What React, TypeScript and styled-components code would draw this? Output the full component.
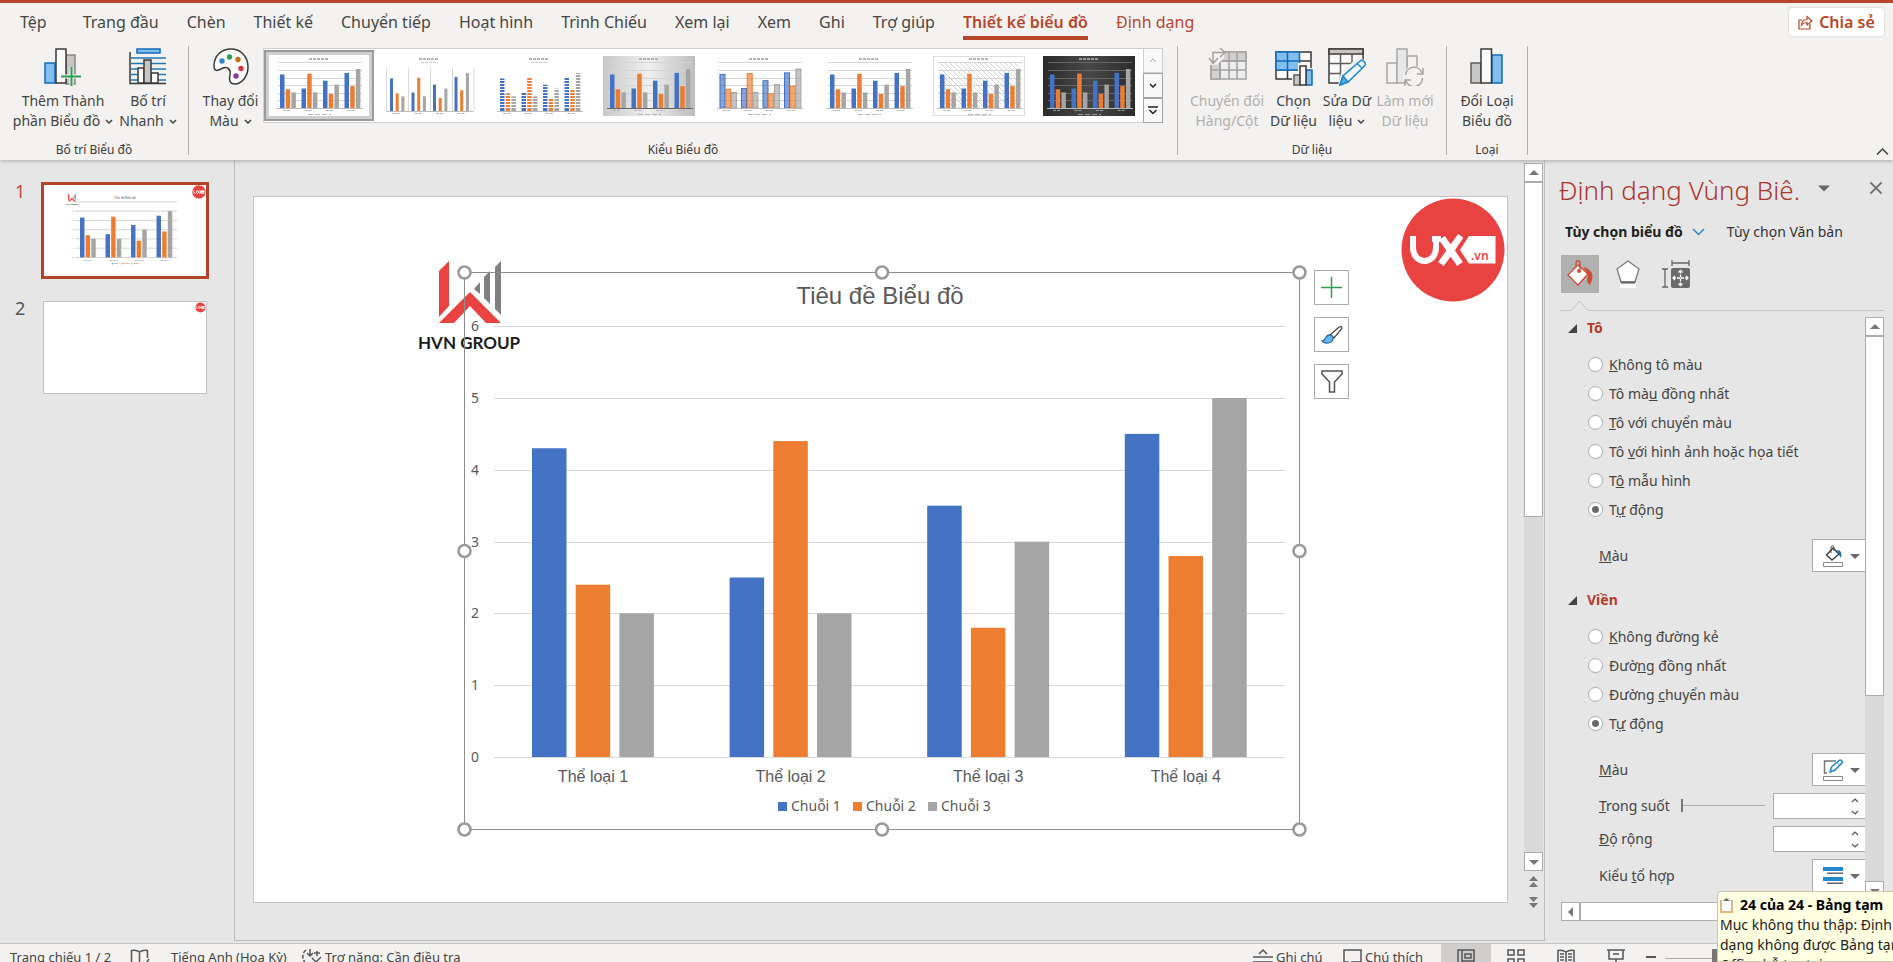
import React, { useState } from 'react';
import styled, { createGlobalStyle, css } from 'styled-components';

const UI = '"Noto Sans", "Open Sans", sans-serif';
const ARIAL = '"Liberation Sans", Arial, sans-serif';
const RED = '#b7472a';

const GlobalStyle = createGlobalStyle`
  *, *::before, *::after { box-sizing: border-box; }
  body { margin: 0; background: #e6e6e6; }
  button, input { font: inherit; color: inherit; margin: 0; }
  button { background: none; border: 0; padding: 0; cursor: pointer; }
  svg { display: block; flex: none; }
`;

const Shell = styled.div`
  display: flex;
  flex-direction: column;
  height: 100vh;
  overflow: hidden;
  background: #e6e6e6;
  color: #444;
  font: 14px/20px ${UI};
  white-space: nowrap;
`;

/* ---------- Ribbon ---------- */

const Ribbon = styled.header`
  position: relative;
  flex: none;
  height: 160px;
  background: #f3f2f1;
  border-top: 3px solid ${RED};
  box-shadow: 0 1px 4px #a8a8a8;
  z-index: 1;
`;

const TabBar = styled.nav`
  display: flex;
  align-items: flex-start;
  gap: 28px;
  height: 43px;
  padding: 5px 9px 0 20px;
  font-size: 16px;
  line-height: 28px;
`;

const Tab = styled.a<{ $tone?: 'active' | 'accent' }>`
  color: ${p => (p.$tone ? RED : '#484644')};
  text-decoration: none;
  &:first-child { margin-right: 8px; }
  ${p => p.$tone === 'active' && css`
    font-weight: 600;
    border-bottom: 4px solid ${RED};
  `}
`;

const ShareButton = styled.button`
  display: flex;
  align-items: center;
  justify-content: center;
  gap: 6px;
  width: 95px;
  height: 28px;
  margin-left: auto;
  background: #fff;
  border-radius: 3px;
  box-shadow: 0 0 2px #bbb;
  color: ${RED};
  font-size: 16px;
  font-weight: 600;
`;

const Groups = styled.div`
  display: flex;
  height: 109px;
`;

const Group = styled.section<{ $width: number }>`
  display: flex;
  flex-direction: column;
  justify-content: space-between;
  width: ${p => p.$width}px;
  border-right: 1px solid #b4b2b0;
`;

const GroupBody = styled.div<{ $center?: boolean }>`
  display: flex;
  justify-content: ${p => (p.$center ? 'center' : 'flex-start')};
  padding-left: ${p => (p.$center ? 0 : 9)}px;
`;

const GroupName = styled.h2`
  margin: 0;
  font-size: 12px;
  line-height: 10px;
  font-weight: 400;
  text-align: center;
  color: #3b3a39;
`;

const RibbonButton = styled.button<{ $width: number }>`
  display: flex;
  flex-direction: column;
  align-items: center;
  width: ${p => p.$width}px;
  color: #444;
  font-size: 14px;
  line-height: 20px;
  &:disabled { color: #b1afad; }
`;

const IconBox = styled.span`
  height: 45px;
  padding-top: 2px;
`;

const LabelLine = styled.span`
  display: flex;
  align-items: center;
  gap: 5px;
`;

const Gallery = styled.div`
  display: flex;
  height: 75px;
  margin-top: 2px;
  background: #fff;
  border: 1px solid #d2d0ce;
`;

const GalleryItem = styled.button<{ $selected?: boolean }>`
  display: flex;
  align-items: center;
  justify-content: center;
  width: 110px;
  height: 71px;
  margin-top: 1px;
  ${p => p.$selected && css`
    border: 2px solid #9a9a9a;
    box-shadow: inset 0 0 0 3px #cfcfcf;
  `}
`;

const GalleryScroll = styled.div`
  display: grid;
  grid-template-rows: repeat(3, 1fr);
  width: 20px;
  margin: -1px;
`;

const GalleryArrow = styled.button`
  display: grid;
  place-items: center;
  background: #f8f8f8;
  border: 1px solid #a5a3a1;
  color: #222;
  &:disabled { color: #aaa; border-color: #d0d0d0; }
`;

const CollapseButton = styled.button`
  position: absolute;
  right: 2px;
  bottom: 3px;
  padding: 2px;
`;

/* ---------- Workspace ---------- */

const Workspace = styled.main`
  display: flex;
  flex: 1;
  min-height: 0;
`;

const Thumbnails = styled.aside`
  display: flex;
  flex-direction: column;
  gap: 20px;
  flex: none;
  width: 235px;
  margin-bottom: 2px;
  padding: 22px 0 0 15px;
  border-right: 1px solid #bdbdbd;
`;

const ThumbRow = styled.button<{ $current?: boolean }>`
  display: flex;
  align-items: flex-start;
  text-align: left;
  font-size: 18px;
  line-height: 18px;
  color: ${p => (p.$current ? '#c9473b' : '#555')};
`;

const ThumbNumber = styled.span`
  width: 26px;
`;

const ThumbFrame = styled.span<{ $current?: boolean }>`
  display: block;
  width: 168px;
  border: 3px solid ${p => (p.$current ? '#b0452c' : 'transparent')};
`;

const ThumbPage = styled.span<{ $current?: boolean }>`
  display: block;
  background: #fff;
  aspect-ratio: 16 / 9;
  box-shadow: ${p => (p.$current ? 'none' : '0 0 0 1px #c4c2c0')};
  svg { width: 100%; height: 100%; }
`;

const Editor = styled.section`
  display: flex;
  flex: 1;
  min-width: 0;
  margin-bottom: 2px;
  border-right: 1px solid #bdbdbd;
  border-bottom: 1px solid #bdbdbd;
`;

const Stage = styled.div`
  flex: 1;
  min-width: 0;
  padding: 37px 17px 0 19px;
`;

const Slide = styled.div`
  position: relative;
  background: #fff;
  box-shadow: 0 0 0 1px #c4c4c4;
  > svg { width: 100%; height: auto; }
`;

const ChartTools = styled.div`
  position: absolute;
  left: 84.6%;
  top: 10.4%;
  display: flex;
  flex-direction: column;
  gap: 12px;
`;

const ChartTool = styled.button`
  display: grid;
  place-items: center;
  width: 35px;
  height: 35px;
  background: #fff;
  border: 1px solid #ababab;
`;

const ScrollColumn = styled.div`
  display: flex;
  flex-direction: column;
  flex: none;
  width: 19px;
`;

const EditorScroll = styled(ScrollColumn)`
  margin: 3px 1px 27px 0;
`;

const ScrollButton = styled.button`
  display: grid;
  place-items: center;
  flex: none;
  width: 19px;
  height: 19px;
  background: #fff;
  border: 1px solid #ababab;
  color: #777;
`;

const Track = styled.div`
  flex: 1;
  background: #dadada;
`;

const Thumb = styled.div<{ $share: number }>`
  height: ${p => p.$share}%;
  background: #fff;
  border: 1px solid #ababab;
`;

const PageJump = styled.button`
  display: grid;
  place-items: center;
  height: 21px;
  color: #777;
`;

/* ---------- Format pane ---------- */

const Pane = styled.aside`
  position: relative;
  display: flex;
  flex-direction: column;
  flex: none;
  width: 348px;
  padding: 13px 9px 22px 14px;
`;

const PaneHeader = styled.div`
  display: flex;
  height: 40px;
`;

const PaneTitle = styled.h1`
  width: 258px;
  margin: 0;
  color: #ac3630;
  font: 300 26px/34px ${UI};
`;

const PaneIconButton = styled.button`
  display: grid;
  place-items: center;
  width: 14px;
  height: 30px;
  margin-right: 38px;
  color: #6a6a6a;
  &:last-child { margin-right: 0; }
`;

const PaneTabs = styled.div`
  display: flex;
  align-items: center;
  gap: 8px;
  height: 38px;
  padding-left: 6px;
`;

const PaneTab = styled.button<{ $active?: boolean }>`
  display: flex;
  align-items: center;
  gap: 9px;
  margin-right: 14px;
  font-weight: ${p => (p.$active ? 700 : 400)};
  color: ${p => (p.$active ? '#222' : '#333')};
`;

const PaneIcons = styled.div`
  display: flex;
  gap: 10px;
  height: 49px;
  padding: 4px 0 0 2px;
`;

const PaneIcon = styled.button<{ $active?: boolean }>`
  display: grid;
  place-items: center;
  width: 38px;
  height: 38px;
  background: ${p => (p.$active ? '#b0b0af' : 'transparent')};
`;

const PaneBody = styled.div`
  display: flex;
  flex: 1;
  min-height: 0;
  margin-bottom: 2px;
`;

const Options = styled.div`
  flex: 1;
  min-width: 0;
  overflow: hidden;
  padding-top: 1px;
`;

const BodyScroll = styled(ScrollColumn)`
  padding-top: 5px;
`;

const Section = styled.section`
  margin-bottom: 13px;
`;

const SectionTitle = styled.button`
  display: flex;
  align-items: center;
  gap: 10px;
  height: 30px;
  margin-bottom: 7px;
  padding-left: 9px;
  color: #b5392c;
  font-weight: 700;
`;

const RadioRow = styled.label`
  display: flex;
  align-items: center;
  gap: 6px;
  height: 29px;
  padding-left: 29px;
`;

const Radio = styled.input`
  appearance: none;
  width: 15px;
  height: 15px;
  border: 1px solid #ababab;
  border-radius: 50%;
  background: #fff;
  &:checked { background: radial-gradient(circle, #6a6a6a 0 3px, #fff 4px); }
`;

const Settings = styled.div`
  display: flex;
  flex-direction: column;
  gap: 7px;
  padding: 15px 0 0 40px;
`;

const Setting = styled.div`
  display: flex;
  align-items: center;
  justify-content: space-between;
`;

const DropButton = styled.button`
  display: flex;
  align-items: center;
  justify-content: space-between;
  width: 53px;
  height: 33px;
  padding: 0 5px 0 10px;
  background: #fff;
  border: 1px solid #ababab;
  border-right: 0;
  color: #6a6a6a;
`;

const Slider = styled.input`
  appearance: none;
  width: 84px;
  height: 13px;
  margin: 0 8px 2px auto;
  background: linear-gradient(#ababab, #ababab) center / 100% 1px no-repeat;
  &::-webkit-slider-thumb {
    appearance: none;
    width: 2px;
    height: 13px;
    background: #777;
  }
`;

const Spinner = styled.div`
  display: flex;
  width: 92px;
  height: 26px;
  background: #fff;
  border: 1px solid #ababab;
  border-right: 0;
`;

const SpinnerInput = styled.input`
  flex: 1;
  min-width: 0;
  border: 0;
  outline: 0;
  background: none;
`;

const SpinnerSteps = styled.div`
  display: flex;
  flex-direction: column;
  justify-content: space-around;
  width: 20px;
  color: #555;
  button { display: grid; place-items: center; height: 10px; }
`;

const PaneHScroll = styled.div`
  display: flex;
  height: 19px;
  margin-left: 2px;
`;

const HThumb = styled.div`
  flex: 1;
  background: #fff;
  border: 1px solid #ababab;
`;

const Toast = styled.div`
  position: fixed;
  right: 0;
  bottom: 0;
  width: 176px;
  height: 71px;
  padding: 3px 0 0 2px;
  overflow: hidden;
  background: #ffffe1;
  border: 1px solid #c9c9b0;
  border-right: 0;
  border-radius: 4px 0 0 0;
  color: #222;
  z-index: 2;
`;

const ToastTitle = styled.div`
  display: flex;
  align-items: center;
  gap: 7px;
  color: #000;
  font-weight: 700;
`;

/* ---------- Status bar ---------- */

const StatusBar = styled.footer`
  flex: none;
  height: 19px;
  overflow: hidden;
  background: #f3f2f1;
  border-top: 1px solid #c6c4c2;
`;

const StatusRow = styled.div`
  display: flex;
  height: 26px;
  padding-left: 10px;
  font-size: 13px;
`;

const StatusButton = styled.button<{ $width: number; $on?: boolean }>`
  display: flex;
  align-items: center;
  gap: 3px;
  width: ${p => p.$width}px;
  background: ${p => (p.$on ? '#d0cecc' : 'transparent')};
`;

const ViewButton = styled(StatusButton)`
  justify-content: center;
`;

const StatusEnd = styled.div`
  display: flex;
  margin-left: auto;
  width: 640px;
`;

const ZoomSlider = styled(Slider)`
  width: 99px;
  height: 18px;
  margin: 5px 0 0 4px;
  &::-webkit-slider-thumb { width: 6px; height: 18px; }
`;

/* ---------- Drawings ---------- */

const BLUE = '#4472c4';
const ORANGE = '#ed7d31';
const GREY = '#a5a5a5';
const SERIES = [
  { name: 'Chuỗi 1', color: BLUE, x: 525 },
  { name: 'Chuỗi 2', color: ORANGE, x: 600 },
  { name: 'Chuỗi 3', color: GREY, x: 675 },
];
const DATA = [[4.3, 2.4, 2], [2.5, 4.4, 2], [3.5, 1.8, 3], [4.5, 2.8, 5]];

const Chevron = ({ size = 8, up = false, w = 1.5 }: { size?: number; up?: boolean; w?: number }) => (
  <svg width={size} height={size / 2 + 1} viewBox={`0 0 ${size} ${size / 2 + 1}`} fill="none" stroke="currentColor" strokeWidth={w}>
    <path d={up ? `M1 ${size / 2}L${size / 2} 1L${size - 1} ${size / 2}` : `M1 1L${size / 2} ${size / 2}L${size - 1} 1`} />
  </svg>
);

const Triangle = ({ dir, w = 10 }: { dir: 'up' | 'down' | 'left'; w?: number }) => {
  const d = { up: 'M0 7L5 2L10 7Z', down: 'M0 3L5 8L10 3Z', left: 'M7 0L2 5L7 10Z' }[dir];
  return <svg width={w} height={w} viewBox="0 0 10 10" fill="currentColor"><path d={d} /></svg>;
};

const UxBadge = ({ cx, cy, scale = 1 }: { cx: number; cy: number; scale?: number }) => (
  <g transform={`translate(${cx} ${cy}) scale(${scale})`}>
    <circle r="51.5" fill="#e84341" />
    <g fill="none" stroke="#fff" strokeWidth="6">
      <path d="M-40-14V-2a11.500 13 0 0 0 23 0V-10" />
      <path d="M-21-11H-12" />
      <path d="M8-14L-12 14" strokeWidth="7" />
      <path d="M-11-12L7 14" strokeWidth="7" />
    </g>
    <path d="M14-16L4-1" stroke="#e84341" strokeWidth="2" />
    <path d="M16-14H42.500V13.500H16L7 0Z" fill="#fff" />
    <text x="18" y="10" fontFamily={UI} fontSize="12" fontWeight="600" fill="#e84341">.vn</text>
  </g>
);

const HvnLogo = () => (
  <g>
    <g fill="#e84341">
      <path d="M186 75L196 65V110L186 121Z" />
      <path d="M217 96L248 127H233L217 110L201 127H186Z" />
    </g>
    <g fill="#808080">
      <path d="M221 93L227 86V98Z" />
      <path d="M231 81L237 75V108L231 102Z" />
      <path d="M242 71L248 65V119L242 113Z" />
    </g>
    <text x="165" y="153" fontFamily="Lato, sans-serif" fontSize="17" fontWeight="700" fill="#1c1c1c">HVN GROUP</text>
  </g>
);

const SlideChart = ({ grid = '#d9d9d9' }: { grid?: string }) => {
  const base = 561;
  const unit = 71.8;
  return (
    <g>
      <text x="627" y="108" textAnchor="middle" fontFamily={ARIAL} fontSize="24" fill="#595959">Tiêu đề Biểu đồ</text>
      {[0, 1, 2, 3, 4, 5, 6].map(n => (
        <g key={n}>
          <path d={`M241 ${Math.round(base - n * unit) + 0.5}H1032`} stroke={grid} strokeWidth={grid === '#d9d9d9' ? 1 : 5} />
          <text x="222" y={Math.round(base - n * unit) + 5} textAnchor="middle" fontFamily={UI} fontSize="14" fill="#595959">{n}</text>
        </g>
      ))}
      {DATA.map((row, i) => (
        <g key={i}>
          {row.map((v, j) => (
            <rect key={j} x={279 + i * 197.6 + j * 43.7} y={base - v * unit} width="34.5" height={v * unit} fill={SERIES[j].color} />
          ))}
          <text x={340 + i * 197.6} y="586" textAnchor="middle" fontFamily={ARIAL} fontSize="16" fill="#595959">{`Thể loại ${i + 1}`}</text>
        </g>
      ))}
      {SERIES.map(s => (
        <g key={s.name}>
          <rect x={s.x} y="606" width="9" height="9" fill={s.color} />
          <text x={s.x + 13} y="615" fontFamily={UI} fontSize="14" fill="#595959">{s.name}</text>
        </g>
      ))}
    </g>
  );
};

const Selection = () => (
  <g fill="none" stroke="#8c8c8c">
    <rect x="211.5" y="76.500" width="835" height="557" />
    <g fill="#fff" stroke="#999" strokeWidth="2.500">
      {[[0, 0], [1, 0], [2, 0], [0, 1], [2, 1], [0, 2], [1, 2], [2, 2]].map(([x, y]) => (
        <circle key={`${x}${y}`} cx={211.5 + x * 417.5} cy={76.5 + y * 278.5} r="6" />
      ))}
    </g>
  </g>
);

const MiniChart = ({ kind }: { kind: number }) => {
  const dark = kind === 7;
  const shaded = kind === 3;
  const thin = kind === 1;
  const bw = thin ? 3 : kind === 4 ? 5 : 4.5;
  const ink = dark ? '#999' : '#b4b4b4';
  const top = thin || kind === 2 ? 6 : 0;
  return (
    <svg width="92" height="60" viewBox="0 0 92 60">
      <defs>
        <linearGradient id={`shade${kind}`}>
          <stop offset="0" stopColor={dark ? '#2b2b2b' : '#c8c8c8'} />
          <stop offset=".5" stopColor={dark ? '#484848' : '#f0f0f0'} />
          <stop offset="1" stopColor={dark ? '#2b2b2b' : '#bdbdbd'} />
        </linearGradient>
        <pattern id="hatch" width="5" height="5" patternUnits="userSpaceOnUse">
          <path d="M0 0L5 5" stroke="#d4d4d4" />
        </pattern>
      </defs>
      {(dark || shaded) && <rect width="92" height="60" fill={`url(#shade${kind})`} />}
      {kind === 6 && <><rect x=".5" y=".5" width="91" height="59" fill="#fff" stroke="#ddd" /><rect x="6" y="6" width="82" height="46" fill="url(#hatch)" /></>}
      <path d="M36 3H56" stroke={ink} strokeWidth="2" strokeDasharray="3 1" />
      {top > 0 && <path d="M38 6.500H55" stroke="#c4c4c4" strokeDasharray="3 1" />}
      {thin
        ? <path d="M3.500 12V56M25.500 12V56M47.500 12V56M69.500 12V56M91 12V56" stroke="#d9d9d9" />
        : kind !== 2 && <path d="M5 6.500H89M5 14.500H89M5 22.500H89M5 29.500H89M5 37.500H89M5 44.500H89" stroke={dark ? '#666' : '#d4d4d4'} />}
      {DATA.map((row, i) => row.map((v, j) => {
        const h = v * 7.8 - top / 6;
        return (
          <rect
            key={`${i}${j}`}
            x={7 + i * 21.5 + j * 5.7}
            y={52 + top / 2 - h}
            width={bw}
            height={h}
            fill={SERIES[j].color}
            fillOpacity={kind === 4 ? 0.65 : 1}
            stroke={kind === 4 ? SERIES[j].color : 'none'}
          />
        );
      }))}
      {kind === 2 && <path d="M4 18.500H91M4 21.500H91M4 24.500H91M4 27.500H91M4 30.500H91M4 33.500H91M4 36.500H91M4 39.500H91M4 42.500H91M4 45.500H91M4 48.500H91M4 51.500H91" stroke="#fff" />}
      <path d={`M4 ${52.5 + top / 2}H90`} stroke={shaded ? '#666' : '#bbb'} />
      <path d={`M10 ${54.5 + top / 2}H18M31.500 ${54.5 + top / 2}H39.500M53 ${54.5 + top / 2}H61M74.500 ${54.5 + top / 2}H82.500`} stroke={ink} strokeDasharray="3 1" />
      {!top && <path d="M35 58.500H58" stroke={ink} strokeDasharray="5 2" />}
    </svg>
  );
};

const AddElementIcon = () => (
  <svg width="38" height="38" viewBox="0 0 38 38" strokeWidth="1.500">
    <path d="M22 7H31V36H22Z" fill="#c8c6c4" stroke="#8a8886" />
    <path d="M1 15H11V35H1Z" fill="#83beec" stroke="#0f6cbd" />
    <path d="M12 1H22V35H12Z" fill="#fafafa" stroke="#3b3a39" />
    <path d="M17 28.500H37M27.500 19V38" stroke="#f3f2f1" strokeWidth="4" />
    <path d="M17 28.500H37M27.500 19V38" stroke="#2f9e55" strokeWidth="2" />
  </svg>
);

const QuickLayoutIcon = () => (
  <svg width="38" height="38" viewBox="0 0 38 38" fill="none" strokeWidth="1.500">
    <path d="M8 1H31V5H8Z" fill="#83beec" stroke="#0f6cbd" />
    <path d="M2 10H37M2 15.500H37M2 21H37M2 26.500H37M2 32H37" stroke="#1f7ab8" />
    <path d="M1 4V35.500H37" stroke="#3b3a39" />
    <path d="M9 20H15V35H9ZM22 25H29V35H22Z" fill="#fafafa" stroke="#3b3a39" />
    <path d="M15 12H22V35H15Z" fill="#c8c6c4" stroke="#3b3a39" />
  </svg>
);

const PaletteIcon = () => (
  <svg width="38" height="38" viewBox="0 0 38 38">
    <path d="M19 1C29 1 36 9 36 19C36 29 29 36 23 36C17 36 17 31 18 27C19 22 16 18 11 20C6 23 2 24 2 18C2 8 9 1 19 1Z" fill="#fafafa" stroke="#3b3a39" strokeWidth="1.500" />
    <circle cx="10" cy="13" r="2.700" fill="#2f88c5" />
    <circle cx="17.500" cy="9" r="2.700" fill="#2f9e55" />
    <circle cx="26" cy="11.500" r="2.700" fill="#c76f15" />
    <circle cx="29" cy="20.500" r="2.700" fill="#d7343f" />
    <circle cx="24" cy="28" r="2.700" fill="#8a3aa0" />
  </svg>
);

const SwitchIcon = () => (
  <svg width="40" height="38" viewBox="0 0 40 38" fill="none" stroke="#a3a1a0" strokeWidth="1.500">
    <path d="M4 4H39V31H4Z" fill="#eee" />
    <path d="M12 4H39V13H12ZM4 13H13V31H4Z" fill="#d2d0ce" />
    <path d="M4 13H39M4 22H39M13 4V31M22 4V31M30 4V31" />
    <path d="M0 0H17V10L10 17H0Z" fill="#f3f2f1" stroke="none" />
    <path d="M6 15V4.500H18M13 0L18 4.500L13 9M2 10L6 15.500L11 10" />
  </svg>
);

const SelectDataIcon = () => (
  <svg width="38" height="38" viewBox="0 0 38 38" fill="none" strokeWidth="1.500">
    <path d="M1 4H36V31H1Z" fill="#fafafa" stroke="#3b3a39" />
    <path d="M1 22H36M12.500 22V31M24 22V31M25 13H36" stroke="#3b3a39" />
    <path d="M1 4H24.500V22H1ZM1 13H24.500M12.500 4V22" fill="#83beec" stroke="#0f6cbd" />
    <path d="M17 24H23V15H34V20H38V38H17Z" fill="#f3f2f1" />
    <path d="M19 27H25V37H19Z" fill="#c8c6c4" stroke="#605e5c" />
    <path d="M31 22H37V37H31Z" fill="#83beec" stroke="#0f6cbd" />
    <path d="M25 18H31V37H25Z" fill="#fafafa" stroke="#3b3a39" />
  </svg>
);

const EditDataIcon = () => (
  <svg width="38" height="38" viewBox="0 0 38 38" fill="none" strokeWidth="1.500">
    <path d="M1 1H35V35H1Z" fill="#fafafa" stroke="#3b3a39" />
    <path d="M1 6V1H35V6Z" fill="#c8c6c4" stroke="#3b3a39" />
    <path d="M1 15.500H35M1 25.500H35M12.500 6V35M24 6V35" stroke="#605e5c" />
    <path d="M10 38L13 25L31 8L38 14V38Z" fill="#f3f2f1" />
    <path d="M12 37L15 28L32 13C34 11 39 15 36.500 18L20 34Z" fill="#f4faff" stroke="#1f86cc" />
    <path d="M12 37L15 28L20 34Z" fill="#5aa9e0" stroke="#1f86cc" />
    <path d="M29 15.500L34 20" stroke="#1f86cc" />
  </svg>
);

const RefreshIcon = () => (
  <svg width="38" height="38" viewBox="0 0 38 38" fill="none" stroke="#a8a6a4" strokeWidth="1.500">
    <path d="M1 15H11V35H1Z" fill="#f3f2f1" />
    <path d="M21 8H31V30H21Z" fill="#f3f2f1" />
    <path d="M11 1H21V35H11Z" fill="#e8e8e8" />
    <circle cx="28" cy="29" r="11" fill="#f3f2f1" stroke="none" />
    <path d="M19.500 27A8.500 8.500 0 0 1 36 25M37 20V26H31M36.500 30A8.500 8.500 0 0 1 20 33M19 38V32H25" />
  </svg>
);

const ChartTypeIcon = () => (
  <svg width="34" height="38" viewBox="0 0 34 38" strokeWidth="1.500">
    <path d="M1 15H11V35H1Z" fill="#c8c6c4" stroke="#605e5c" />
    <path d="M22 7H32V35H22Z" fill="#83beec" stroke="#0f6cbd" />
    <path d="M11 1H21.500V35H11Z" fill="#fafafa" stroke="#3b3a39" />
  </svg>
);

const ShareIcon = () => (
  <svg width="15" height="15" viewBox="0 0 15 15" fill="none" stroke={RED} strokeWidth="1.200">
    <path d="M4 5H1V14H12V9" />
    <path d="M3.500 10C4 6 6 4.500 9 4.500V1.500L14 6L9 10V7.500C7 7.500 5 8 3.500 10Z" />
  </svg>
);

const BucketSmall = () => (
  <svg width="21" height="22" viewBox="0 0 21 22" fill="none">
    <path d="M10 3L16 9L9 15L3.500 10Z" fill="#fff" stroke="#444" strokeWidth="1.500" />
    <path d="M8 8V3C8 0 11 0 11 3V6" stroke="#444" />
    <path d="M14 5C18 5 19 8 18 13L15.500 9Z" fill="#1f6fa8" />
    <path d="M.5 17.500H19.500V21.500H.5Z" fill="#fff" stroke="#8a8886" />
  </svg>
);

const OutlineSmall = () => (
  <svg width="21" height="22" viewBox="0 0 21 22" fill="none">
    <path d="M13 2H1.500V14H4" stroke="#777" strokeWidth="1.500" />
    <path d="M7 13L8.500 8L16 1.500C18 0 20.500 2.500 18.500 4.500L12 11Z" fill="#fff" stroke="#1f86cc" strokeWidth="1.500" />
    <path d="M14 3.500L17 6.500" stroke="#1f86cc" />
    <path d="M.5 17.500H19.500V21.500H.5Z" fill="#fff" stroke="#8a8886" />
  </svg>
);

const CompoundSmall = () => (
  <svg width="21" height="18" viewBox="0 0 21 18">
    <path d="M0 0H20V4H0ZM0 10H20V14H0Z" fill="#2388cc" />
    <path d="M4 5.500H20V7H4ZM4 15.500H20V17H4Z" fill="#666" />
  </svg>
);

/* ---------- Composition ---------- */

const TABS = ['Tệp', 'Trang đầu', 'Chèn', 'Thiết kế', 'Chuyển tiếp', 'Hoạt hình', 'Trình Chiếu', 'Xem lại', 'Xem', 'Ghi', 'Trợ giúp'];

type BigProps = { icon: React.ReactNode; a: string; b: string; width: number; menu?: boolean; disabled?: boolean };
const BigButton = ({ icon, a, b, width, menu, disabled }: BigProps) => (
  <RibbonButton $width={width} disabled={disabled}>
    <IconBox>{icon}</IconBox>
    <LabelLine>{a}</LabelLine>
    <LabelLine>{b}{menu && <Chevron />}</LabelLine>
  </RibbonButton>
);

type Label = [string, string, string];
const FILL: Label[] = [
  ['', 'K', 'hông tô màu'],
  ['Tô mà', 'u', ' đồng nhất'],
  ['', 'T', 'ô với chuyển màu'],
  ['Tô ', 'v', 'ới hình ảnh hoặc họa tiết'],
  ['T', 'ô', ' mẫu hình'],
  ['T', 'ự', ' động'],
];
const LINE: Label[] = [
  ['', 'K', 'hông đường kẻ'],
  ['Đườ', 'n', 'g đồng nhất'],
  ['Đường ', 'c', 'huyển màu'],
  ['T', 'ự', ' động'],
];

const RadioGroup = ({ name, items }: { name: string; items: Label[] }) => {
  const [value, setValue] = useState(items.length - 1);
  return (
    <div role="radiogroup" aria-label={name}>
      {items.map(([a, key, b], i) => (
        <RadioRow key={i}>
          <Radio type="radio" name={name} checked={value === i} onChange={() => setValue(i)} />
          <span>{a}<u>{key}</u>{b}</span>
        </RadioRow>
      ))}
    </div>
  );
};

const Spin = ({ id }: { id: string }) => (
  <Spinner>
    <SpinnerInput id={id} type="text" />
    <SpinnerSteps>
      <button aria-label="Tăng"><Chevron size={8} up w={1.2} /></button>
      <button aria-label="Giảm"><Chevron size={8} w={1.2} /></button>
    </SpinnerSteps>
  </Spinner>
);

const Disclosure = ({ children }: { children: React.ReactNode }) => (
  <SectionTitle aria-expanded="true">
    <svg width="9" height="9" viewBox="0 0 9 9" fill="#444"><path d="M9 0V9H0Z" /></svg>
    {children}
  </SectionTitle>
);

export default function App() {
  return (
    <Shell>
      <GlobalStyle />
      <Ribbon>
        <TabBar>
          {TABS.map(t => <Tab key={t} href="#">{t}</Tab>)}
          <Tab href="#" $tone="active">Thiết kế biểu đồ</Tab>
          <Tab href="#" $tone="accent">Định dạng</Tab>
          <ShareButton><ShareIcon />Chia sẻ</ShareButton>
        </TabBar>
        <Groups>
          <Group $width={189}>
            <GroupBody>
              <BigButton icon={<AddElementIcon />} a="Thêm Thành" b="phần Biểu đồ" menu width={108} />
              <BigButton icon={<QuickLayoutIcon />} a="Bố trí" b="Nhanh" menu width={62} />
            </GroupBody>
            <GroupName>Bố trí Biểu đồ</GroupName>
          </Group>
          <Group $width={989}>
            <GroupBody>
              <BigButton icon={<PaletteIcon />} a="Thay đổi" b="Màu" menu width={65} />
              <Gallery>
                {[0, 1, 2, 3, 4, 5, 6, 7].map(k => (
                  <GalleryItem key={k} $selected={k === 0} aria-label={`Kiểu ${k + 1}`}><MiniChart kind={k} /></GalleryItem>
                ))}
                <GalleryScroll>
                  <GalleryArrow disabled aria-label="Lên"><Chevron up w={1} /></GalleryArrow>
                  <GalleryArrow aria-label="Xuống"><Chevron /></GalleryArrow>
                  <GalleryArrow aria-label="Thêm">
                    <svg width="10" height="9" viewBox="0 0 10 9" fill="none" stroke="currentColor" strokeWidth="1.500"><path d="M0 1H10M1.500 4L5 7.500L8.500 4" /></svg>
                  </GalleryArrow>
                </GalleryScroll>
              </Gallery>
            </GroupBody>
            <GroupName>Kiểu Biểu đồ</GroupName>
          </Group>
          <Group $width={269}>
            <GroupBody>
              <BigButton icon={<SwitchIcon />} a="Chuyển đổi" b="Hàng/Cột" disabled width={80} />
              <BigButton icon={<SelectDataIcon />} a="Chọn" b="Dữ liệu" width={53} />
              <BigButton icon={<EditDataIcon />} a="Sửa Dữ" b="liệu" menu width={54} />
              <BigButton icon={<RefreshIcon />} a="Làm mới" b="Dữ liệu" disabled width={62} />
            </GroupBody>
            <GroupName>Dữ liệu</GroupName>
          </Group>
          <Group $width={81}>
            <GroupBody $center>
              <BigButton icon={<ChartTypeIcon />} a="Đổi Loại" b="Biểu đồ" width={62} />
            </GroupBody>
            <GroupName>Loại</GroupName>
          </Group>
        </Groups>
        <CollapseButton aria-label="Thu gọn"><Chevron size={13} up /></CollapseButton>
      </Ribbon>

      <Workspace>
        <Thumbnails>
          <ThumbRow $current>
            <ThumbNumber>1</ThumbNumber>
            <ThumbFrame $current>
              <ThumbPage $current>
                <svg viewBox="0 0 1255 706"><HvnLogo /><SlideChart grid="#bdbdbd" /><UxBadge cx={1200} cy={54} /></svg>
              </ThumbPage>
            </ThumbFrame>
          </ThumbRow>
          <ThumbRow>
            <ThumbNumber>2</ThumbNumber>
            <ThumbFrame>
              <ThumbPage>
                <svg viewBox="0 0 1255 706"><UxBadge cx={1212} cy={42} scale={0.75} /></svg>
              </ThumbPage>
            </ThumbFrame>
          </ThumbRow>
        </Thumbnails>

        <Editor>
          <Stage>
            <Slide>
              <svg viewBox="1 1 1253 705">
                <HvnLogo />
                <SlideChart />
                <UxBadge cx={1200} cy={54} />
                <Selection />
              </svg>
              <ChartTools>
                <ChartTool aria-label="Thành phần biểu đồ">
                  <svg width="21" height="21" viewBox="0 0 21 21" stroke="#2f9e55" strokeWidth="1.500"><path d="M0 10.500H21M10.500 0V21" /></svg>
                </ChartTool>
                <ChartTool aria-label="Kiểu biểu đồ">
                  <svg width="22" height="18" viewBox="0 0 22 18" strokeWidth="1.200">
                    <path d="M9 9L17 2C19 0 22 0 20.500 3L13 12Z" fill="#fff" stroke="#444" />
                    <path d="M1 15C4 15 4 12 6 10C8 8 13 9 12 13C11 18 4 18 1 15Z" fill="#6db3ec" stroke="#17609c" />
                  </svg>
                </ChartTool>
                <ChartTool aria-label="Bộ lọc biểu đồ">
                  <svg width="22" height="23" viewBox="0 0 22 23" fill="#fafafa" stroke="#555" strokeWidth="1.500"><path d="M1 1H21V4L13.500 12V22H8.500V12L1 4Z" /></svg>
                </ChartTool>
              </ChartTools>
            </Slide>
          </Stage>
          <EditorScroll>
            <ScrollButton aria-label="Cuộn lên"><Triangle dir="up" /></ScrollButton>
            <Track><Thumb $share={50} /></Track>
            <ScrollButton aria-label="Cuộn xuống"><Triangle dir="down" /></ScrollButton>
            <PageJump aria-label="Trang trước"><svg width="9" height="11" viewBox="0 0 9 11" fill="currentColor"><path d="M0 5L4.500 0L9 5ZM0 11L4.500 6L9 11Z" /></svg></PageJump>
            <PageJump aria-label="Trang sau"><svg width="9" height="11" viewBox="0 0 9 11" fill="currentColor"><path d="M0 0L4.500 5L9 0ZM0 6L4.500 11L9 6Z" /></svg></PageJump>
          </EditorScroll>
        </Editor>

        <Pane>
          <PaneHeader>
            <PaneTitle>Định dạng Vùng Biê.</PaneTitle>
            <PaneIconButton aria-label="Tùy chọn"><Triangle dir="down" w={12} /></PaneIconButton>
            <PaneIconButton aria-label="Đóng">
              <svg width="12" height="12" viewBox="0 0 12 12" stroke="currentColor" strokeWidth="1.800"><path d="M.5.5L11.500 11.500M11.500.5L.5 11.500" /></svg>
            </PaneIconButton>
          </PaneHeader>
          <PaneTabs>
            <PaneTab $active>Tùy chọn biểu đồ
              <svg width="13" height="8" viewBox="0 0 13 8" fill="none" stroke="#2f86c5" strokeWidth="1.500"><path d="M1 1L6.500 6.500L12 1" /></svg>
            </PaneTab>
            <PaneTab>Tùy chọn Văn bản</PaneTab>
          </PaneTabs>
          <PaneIcons>
            <PaneIcon $active aria-label="Tô và viền">
              <svg width="28" height="28" viewBox="0 0 28 28" fill="none">
                <path d="M12 5L22 14L12 25L2 15Z" fill="#fff" stroke="#cf4a36" strokeWidth="1.300" />
                <path d="M17 7C23 8 28 13 26 20L24 25L21 22L22 14Z" fill="#cf4a36" />
                <path d="M10 6V3C10 0 14 0 14 3V10" stroke="#cf4a36" strokeWidth="1.300" />
                <circle cx="13" cy="11" r="2" fill="#cf4a36" />
              </svg>
            </PaneIcon>
            <PaneIcon aria-label="Hiệu ứng">
              <svg width="24" height="28" viewBox="0 0 24 28">
                <path d="M5 24L3 28H21L19 24Z" fill="#fafafa" />
                <path d="M12 1L23 9L19 22H5L1 9Z" fill="#fff" stroke="#7a7a7a" strokeWidth="1.300" />
                <path d="M5 22.500H19" stroke="#666" strokeWidth="2" />
              </svg>
            </PaneIcon>
            <PaneIcon aria-label="Kích thước">
              <svg width="28" height="28" viewBox="0 0 28 28" fill="none" stroke="#666" strokeWidth="1.300">
                <path d="M10 3H27M10 0V6M27 0V6M3 9V27M0 9H6M0 27H6" />
                <rect x="9" y="8" width="19" height="20" rx="2" fill="#6a6a6a" stroke="none" />
                <g stroke="#fff">
                  <path d="M11 18H26M18.500 10.500V25.500" strokeDasharray="3 1" />
                  <path d="M13 16L11 18L13 20M24 16L26 18L24 20M16.500 12.500L18.500 10.500L20.500 12.500M16.500 23.500L18.500 25.500L20.500 23.500" />
                </g>
              </svg>
            </PaneIcon>
          </PaneIcons>
          <svg width="100%" height="12" fill="none" stroke="#c2c2c2">
            <path d="M1 10.500H12L20.500 1L29 10.500H1000" />
          </svg>
          <PaneBody>
            <Options>
              <Section>
                <Disclosure>Tô</Disclosure>
                <RadioGroup name="Tô" items={FILL} />
                <Settings>
                  <Setting>
                    <span><u>M</u>àu</span>
                    <DropButton aria-label="Màu tô"><BucketSmall /><Triangle dir="down" /></DropButton>
                  </Setting>
                </Settings>
              </Section>
              <Section>
                <Disclosure>Viền</Disclosure>
                <RadioGroup name="Viền" items={LINE} />
                <Settings>
                  <Setting>
                    <span><u>M</u>àu</span>
                    <DropButton aria-label="Màu viền"><OutlineSmall /><Triangle dir="down" /></DropButton>
                  </Setting>
                  <Setting>
                    <label htmlFor="opacity"><u>T</u>rong suốt</label>
                    <Slider type="range" defaultValue={0} aria-label="Trong suốt" />
                    <Spin id="opacity" />
                  </Setting>
                  <Setting>
                    <label htmlFor="width"><u>Đ</u>ộ rộng</label>
                    <Spin id="width" />
                  </Setting>
                  <Setting>
                    <span>Kiểu <u>t</u>ổ hợp</span>
                    <DropButton aria-label="Kiểu tổ hợp"><CompoundSmall /><Triangle dir="down" /></DropButton>
                  </Setting>
                </Settings>
              </Section>
            </Options>
            <BodyScroll>
              <ScrollButton aria-label="Cuộn lên"><Triangle dir="up" /></ScrollButton>
              <Track><Thumb $share={66} /></Track>
              <ScrollButton aria-label="Cuộn xuống"><Triangle dir="down" /></ScrollButton>
            </BodyScroll>
          </PaneBody>
          <PaneHScroll>
            <ScrollButton aria-label="Cuộn trái"><Triangle dir="left" /></ScrollButton>
            <HThumb />
          </PaneHScroll>
        </Pane>
      </Workspace>

      <StatusBar>
        <StatusRow>
          <StatusButton $width={120}>Trang chiếu 1 / 2</StatusButton>
          <StatusButton $width={41} aria-label="Kiểm tra chính tả">
            <svg width="20" height="18" viewBox="0 0 20 18" fill="none" stroke="#555" strokeWidth="1.500"><path d="M9.500 4C7 2 4 2 1.500 2.500V15C4 15 7 15 9.500 17M9.500 4C12 2 15 2 17.500 2.500V10M9.500 4V17M13 14L15 16.500L19 11" /></svg>
          </StatusButton>
          <StatusButton $width={130}>Tiếng Anh (Hoa Kỳ)</StatusButton>
          <StatusButton $width={170}>
            <svg width="21" height="18" viewBox="0 0 21 18" fill="none" stroke="#555" strokeWidth="1.500"><path d="M5 2C1 5 1 11 4 14" strokeDasharray="4 1.500" /><path d="M9 1V8M6 5L9 8L12 5M11 10L15 14L20 9M13 5H19M16 3V8" /></svg>
            Trợ năng: Cần điều tra
          </StatusButton>
          <StatusEnd>
            <StatusButton $width={90}>
              <svg width="20" height="18" viewBox="0 0 20 18" fill="none" stroke="#555" strokeWidth="1.500"><path d="M6 6L10 2L14 6M0 9H20M0 14H20" /></svg>
              Ghi chú
            </StatusButton>
            <StatusButton $width={98}>
              <svg width="19" height="18" viewBox="0 0 19 18" fill="none" stroke="#555" strokeWidth="1.500"><path d="M1 2H18V14H9L5 17V14H1Z" /></svg>
              Chú thích
            </StatusButton>
            <ViewButton $width={50} $on aria-label="Thông thường">
              <svg width="18" height="17" viewBox="0 0 18 17" fill="none" stroke="#555" strokeWidth="1.500"><path d="M1 1H17V16H1ZM5 1V16M8 5H14V9H8ZM5 12H17" /></svg>
            </ViewButton>
            <ViewButton $width={50} aria-label="Sắp xếp trang">
              <svg width="18" height="17" viewBox="0 0 18 17" fill="none" stroke="#555" strokeWidth="1.500"><path d="M1 1H7V6H1ZM11 1H17V6H11ZM1 10H7V15H1ZM11 10H17V15H11Z" /></svg>
            </ViewButton>
            <ViewButton $width={50} aria-label="Dạng xem đọc">
              <svg width="18" height="17" viewBox="0 0 18 17" fill="none" stroke="#555" strokeWidth="1.500"><path d="M9 3C6 1 4 1 1 1.500V14H8L9 16L10 14H17V1.500C14 1 12 1 9 3ZM9 3V15M3 5H7M3 8H7M3 11H7M11 5H15M11 8H15M11 11H15" /></svg>
            </ViewButton>
            <ViewButton $width={50} aria-label="Trình chiếu">
              <svg width="18" height="17" viewBox="0 0 18 17" fill="none" stroke="#555" strokeWidth="1.500"><path d="M0 1H18M2 1V10H16V1M6 5H12M9 10V16M5 16H13" /></svg>
            </ViewButton>
            <ViewButton $width={20} aria-label="Thu nhỏ">
              <svg width="10" height="2" viewBox="0 0 10 2" fill="#555"><path d="M0 0H10V2H0Z" /></svg>
            </ViewButton>
            <ZoomSlider type="range" aria-label="Thu phóng" />
          </StatusEnd>
        </StatusRow>
      </StatusBar>

      <Toast role="status">
        <ToastTitle>
          <svg width="13" height="15" viewBox="0 0 13 15" fill="none"><path d="M1 2V14H12V2" fill="#fff" stroke="#e8b67c" strokeWidth="2" /><path d="M3 3H10L6.500 0Z" fill="#666" /></svg>
          24 của 24 - Bảng tạm
        </ToastTitle>
        Mục không thu thập: Định<br />
        dạng không được Bảng tạm<br />
        Office hỗ trợ tại
      </Toast>
    </Shell>
  );
}
